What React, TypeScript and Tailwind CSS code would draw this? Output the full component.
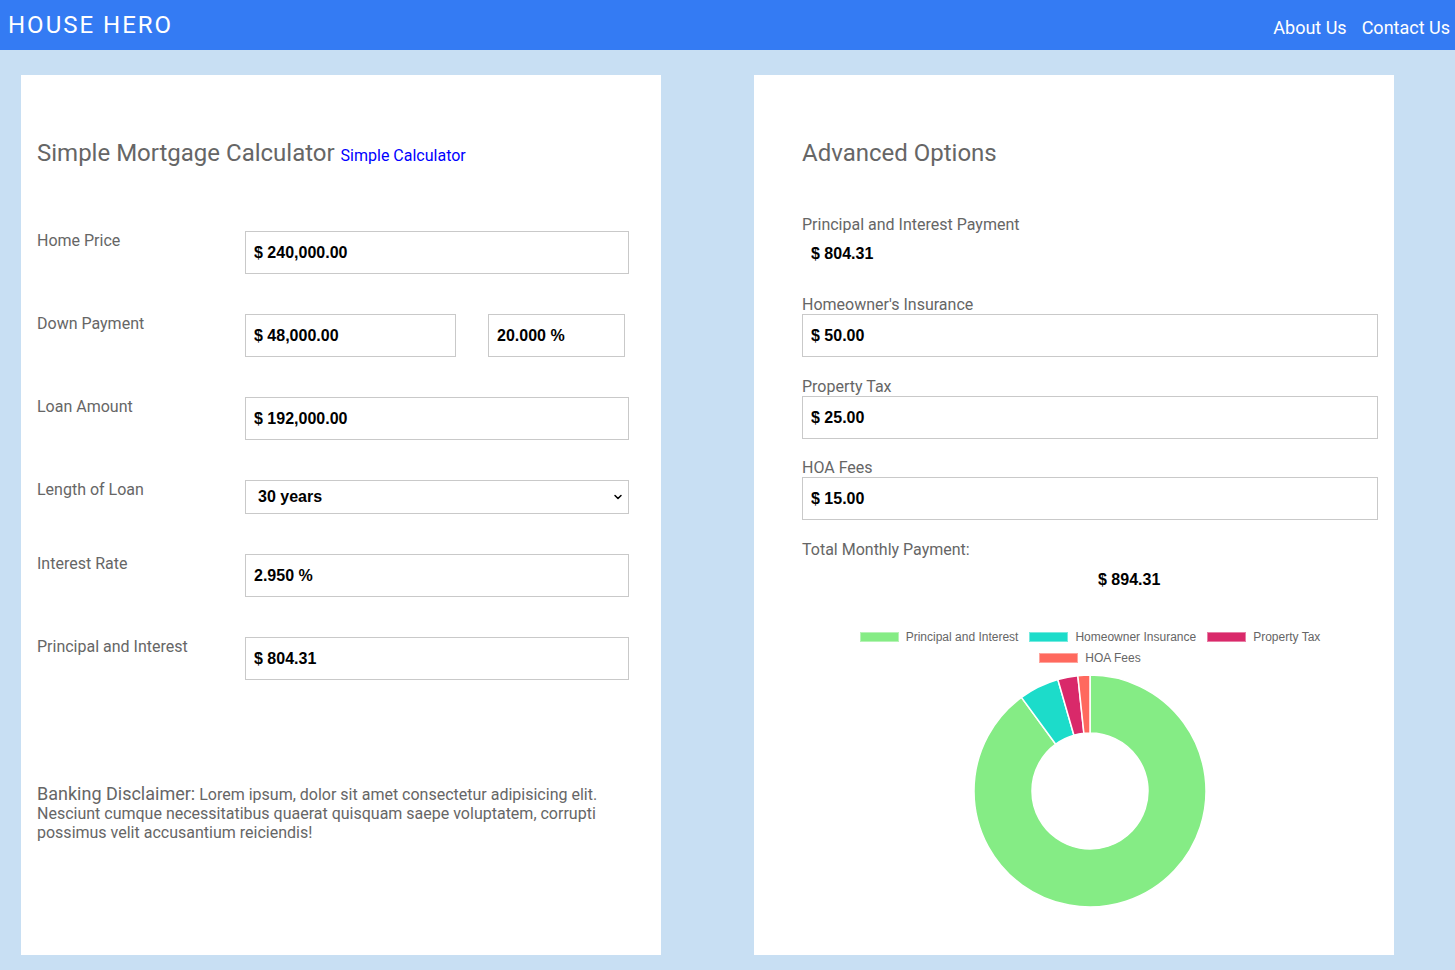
import { ChevronDown } from "lucide-react";

const roboto = "font-['Roboto',sans-serif]";
const valueFont = "font-['Liberation_Sans',Arial,sans-serif] font-bold text-[16px] text-black";

type Slice = { label: string; value: number; color: string };

const slices: Slice[] = [
  { label: "Principal and Interest", value: 804.31, color: "#85ec85" },
  { label: "Homeowner Insurance", value: 50, color: "#1cdcca" },
  { label: "Property Tax", value: 25, color: "#d9296a" },
  { label: "HOA Fees", value: 15, color: "#ff695e" },
];

function arcPath(cx: number, cy: number, r: number, r0: number, a0: number, a1: number) {
  const p = (rad: number, a: number) => [cx + rad * Math.cos(a), cy + rad * Math.sin(a)];
  const large = a1 - a0 > Math.PI ? 1 : 0;
  const [x0, y0] = p(r, a0);
  const [x1, y1] = p(r, a1);
  const [x2, y2] = p(r0, a1);
  const [x3, y3] = p(r0, a0);
  return `M${x0} ${y0} A${r} ${r} 0 ${large} 1 ${x1} ${y1} L${x2} ${y2} A${r0} ${r0} 0 ${large} 0 ${x3} ${y3} Z`;
}

function Doughnut() {
  const total = slices.reduce((s, x) => s + x.value, 0);
  let start = -Math.PI / 2;
  return (
    <svg width="236" height="236" viewBox="0 0 236 236" aria-hidden>
      {slices.map((s) => {
        const end = start + (s.value / total) * Math.PI * 2;
        const d = arcPath(118, 118, 116, 58, start, end);
        start = end;
        return <path key={s.label} d={d} fill={s.color} stroke="#fff" strokeWidth={1.5} />;
      })}
    </svg>
  );
}

function LegendItem({ s }: { s: Slice }) {
  return (
    <div className="flex items-center">
      <span className="h-[10px] w-[39px] border border-white/40" style={{ backgroundColor: s.color }} />
      <span className="ml-[7px] text-[12px] leading-[14px] text-[#666]">{s.label}</span>
    </div>
  );
}

function Field({ value, className }: { value: string; className?: string }) {
  return (
    <input
      readOnly
      value={value}
      className={`h-[43px] border border-[#c9c9c9] bg-white px-[8px] outline-none ${valueFont} ${className ?? ""}`}
    />
  );
}

function Row({ label, children }: { label: string; children: React.ReactNode }) {
  return (
    <div className="flex">
      <div className="w-[208px] text-[16px] leading-[19px] text-[#666]">{label}</div>
      {children}
    </div>
  );
}

export default function App() {
  return (
    <div className={`min-h-[970px] bg-[#c8dff3] ${roboto}`}>
      <header className="flex h-[50px] items-start justify-between bg-[#347bf3] text-white">
        <div className="pl-2 pt-[11px] text-[24px] leading-[28px] tracking-[2px]">HOUSE HERO</div>
        <nav className="flex gap-[15px] pr-[5px] pt-[17px] text-[18px] leading-[22px]">
          <a href="#about">About Us</a>
          <a href="#contact">Contact Us</a>
        </nav>
      </header>

      <main className="flex gap-[93px] pl-[21px] pt-[25px]">
        {/* simple calculator */}
        <section className="h-[880px] w-[640px] bg-white px-4 pt-[64px]">
          <h1 className="text-[24px] leading-[28px] text-[#666]">
            Simple Mortgage Calculator{" "}
            <a href="#simple" className="text-[16px] text-[#0000ff]">
              Simple Calculator
            </a>
          </h1>

          <div className="mt-[61px] flex flex-col gap-[40px]">
            <Row label="Home Price">
              <Field value="$ 240,000.00" className="w-[384px]" />
            </Row>
            <Row label="Down Payment">
              <div className="flex gap-[32px]">
                <Field value="$ 48,000.00" className="w-[211px]" />
                <Field value="20.000 %" className="w-[137px]" />
              </div>
            </Row>
            <Row label="Loan Amount">
              <Field value="$ 192,000.00" className="h-[42px] w-[384px]" />
            </Row>
            <Row label="Length of Loan">
              <div className="relative h-[34px] w-[384px]">
                <select
                  defaultValue="30"
                  className={`h-full w-full appearance-none border border-[#c9c9c9] bg-white pl-[12px] outline-none ${valueFont}`}
                >
                  <option value="30">30 years</option>
                  <option value="15">15 years</option>
                </select>
                <ChevronDown
                  className="pointer-events-none absolute right-[5px] top-[11px] h-[12px] w-[12px] text-black"
                  strokeWidth={3}
                />
              </div>
            </Row>
            <Row label="Interest Rate">
              <Field value="2.950 %" className="w-[384px]" />
            </Row>
            <Row label="Principal and Interest">
              <Field value="$ 804.31" className="w-[384px]" />
            </Row>
          </div>

          <p className="mt-[104px] text-[16px] leading-[19px] text-[#666]">
            <span className="text-[18px] leading-[19px]">Banking Disclaimer:</span> Lorem ipsum, dolor sit amet
            consectetur adipisicing elit. Nesciunt cumque necessitatibus quaerat quisquam saepe voluptatem, corrupti
            possimus velit accusantium reiciendis!
          </p>
        </section>

        {/* advanced options */}
        <section className="h-[880px] w-[640px] bg-white pl-12 pr-4 pt-[64px]">
          <h2 className="text-[24px] leading-[28px] text-[#666]">Advanced Options</h2>

          <div className="mt-[48px] text-[16px] leading-[19px] text-[#666]">Principal and Interest Payment</div>
          <div className={`mt-[11px] pl-[9px] leading-[18px] ${valueFont}`}>$ 804.31</div>

          <div className="mt-[32px] text-[16px] leading-[19px] text-[#666]">Homeowner's Insurance</div>
          <Field value="$ 50.00" className="w-[576px]" />

          <div className="mt-[20px] text-[16px] leading-[19px] text-[#666]">Property Tax</div>
          <Field value="$ 25.00" className="h-[42px] w-[576px]" />

          <div className="mt-[19px] text-[16px] leading-[19px] text-[#666]">HOA Fees</div>
          <Field value="$ 15.00" className="w-[576px]" />

          <div className="mt-[20px] text-[16px] leading-[19px] text-[#666]">Total Monthly Payment:</div>
          <div className={`mt-[12px] pl-[296px] leading-[18px] ${valueFont}`}>$ 894.31</div>

          <div className="mt-[41px] w-[576px] font-['Liberation_Sans',Arial,sans-serif]">
            <div className="flex flex-wrap justify-center gap-x-[11px] gap-y-[7px] px-[50px]">
              {slices.slice(0, 3).map((s) => (
                <LegendItem key={s.label} s={s} />
              ))}
            </div>
            <div className="mt-[7px] flex justify-center">
              <LegendItem s={slices[3]} />
            </div>
            <div className="mt-[8px] flex justify-center">
              <Doughnut />
            </div>
          </div>
        </section>
      </main>
    </div>
  );
}
